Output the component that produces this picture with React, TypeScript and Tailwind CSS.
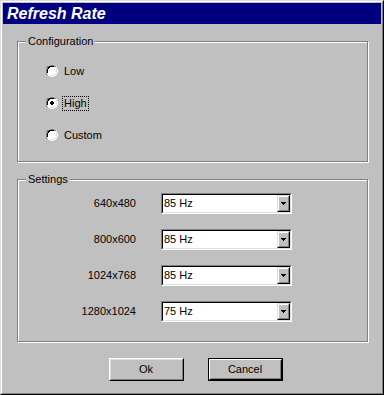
import React from 'react';

const modes = ['640x480', '800x600', '1024x768', '1280x1024'];
const rates = ['85 Hz', '85 Hz', '85 Hz', '75 Hz'];

const Radio = ({ checked }: { checked?: boolean }) => (
  <svg width="12" height="12" viewBox="0 0 12 12" shapeRendering="crispEdges">
    <circle cx="6" cy="6" r="5.5" fill="#ffffff" />
    <path d="M4 0h4v1h2v1h-6v1h-1v1h-1v4h-1v2h-1v-2h-1v-4h1v-2h1v-1h2z" fill="#808080" />
    <path d="M4 1h4v1h-4v1h-1v1h-1v4h-1v-4h1v-2h1v-1z" fill="#000000" />
    <path d="M10 2h1v2h1v4h-1v2h-1v1h-2v1h-4v-1h-2v-1h2v1h4v-1h2v-2h1v-4h-1z" fill="#ffffff" />
    <path d="M10 3h1v5h-1v2h-2v1h-4v-1h4v-1h2z" fill="#dfdfdf" />
    {checked && <path d="M5 4h2v1h1v2h-1v1h-2v-1h-1v-2h1z" fill="#000000" />}
  </svg>
);

const GroupBox = ({ label, className, children }: { label: string; className: string; children: React.ReactNode }) => (
  <div className={`relative border border-[#808080] shadow-[inset_1px_1px_0_#ffffff,1px_1px_0_#ffffff] ${className}`}>
    <span className="absolute left-[8px] top-[-7px] bg-[#c0c0c0] px-[2px] leading-[13px]">{label}</span>
    {children}
  </div>
);

const Select = ({ value }: { value: string }) => (
  <div className="w-[131px] h-[21px] border border-t-[#808080] border-l-[#808080] border-b-white border-r-white">
    <div className="h-full border border-t-black border-l-black border-b-[#dfdfdf] border-r-[#dfdfdf] bg-white flex items-center">
      <span className="flex-1 pl-px leading-[13px]">{value}</span>
      <div className="w-[13px] h-[17px] bg-[#c0c0c0] border border-t-[#dfdfdf] border-l-[#dfdfdf] border-b-black border-r-black">
        <div className="h-full border border-t-white border-l-white border-b-[#808080] border-r-[#808080] flex items-center justify-center">
          <svg width="5" height="3" viewBox="0 0 5 3" shapeRendering="crispEdges">
            <path d="M0 0h5v1h-1v1h-1v1h-1v-1h-1v-1h-1z" fill="#000" />
          </svg>
        </div>
      </div>
    </div>
  </div>
);

export default function App() {
  return (
    <div className="w-[384px] h-[395px] bg-[#c0c0c0] border border-t-[#dfdfdf] border-l-[#dfdfdf] border-r-black border-b-black font-['Liberation_Sans',Arial,sans-serif] text-[11px] text-black">
      <div className="h-full border border-t-white border-l-white border-r-[#808080] border-b-[#808080] p-px flex flex-col">
        <div className="h-[21px] bg-[#000080] flex items-center pl-[4px]">
          <span className="text-white font-bold italic text-[16px] leading-[18px]">Refresh Rate</span>
        </div>

        <div className="flex flex-col pl-[14px] pr-[13px] pt-[17px]">
          <GroupBox label="Configuration" className="h-[121px]">
            <div className="flex flex-col gap-[20px] pt-[23px] pl-[28px]">
              {['Low', 'High', 'Custom'].map((opt) => (
                <div key={opt} className="flex items-center h-[12px]">
                  <Radio checked={opt === 'High'} />
                  <span
                    className={`ml-[4px] px-px leading-[13px] border border-dotted ${
                      opt === 'High' ? 'border-black' : 'border-transparent'
                    }`}
                  >
                    {opt}
                  </span>
                </div>
              ))}
            </div>
          </GroupBox>

          <GroupBox label="Settings" className="h-[163px] mt-[17px]">
            <div className="flex flex-col gap-[15px] pt-[13px]">
              {modes.map((m, i) => (
                <div key={m} className="flex items-center h-[21px]">
                  <span className="w-[118px] text-right leading-[13px]">{m}</span>
                  <div className="ml-[25px]">
                    <Select value={rates[i]} />
                  </div>
                </div>
              ))}
            </div>
          </GroupBox>

          <div className="flex justify-center gap-[24px] pl-[6px] mt-[16px]">
            <button className="w-[75px] h-[23px] bg-[#c0c0c0] border border-t-white border-l-white border-b-black border-r-black">
              <div className="h-full border border-t-[#dfdfdf] border-l-[#dfdfdf] border-b-[#808080] border-r-[#808080] flex items-center justify-center leading-[13px]">
                Ok
              </div>
            </button>
            <button className="w-[75px] h-[23px] bg-[#c0c0c0] border border-black">
              <div className="h-full border border-t-white border-l-white border-b-black border-r-black">
                <div className="h-full border border-t-[#c0c0c0] border-l-[#c0c0c0] border-b-[#808080] border-r-[#808080] flex items-center justify-center leading-[13px]">
                  Cancel
                </div>
              </div>
            </button>
          </div>
        </div>
      </div>
    </div>
  );
}
